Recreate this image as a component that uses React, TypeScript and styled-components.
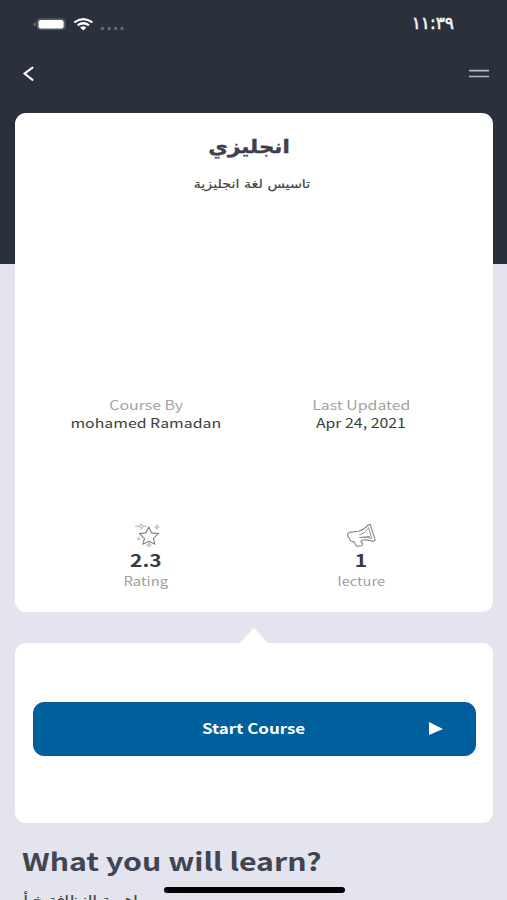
import React from "react";
import styled, { createGlobalStyle } from "styled-components";

const GlobalStyle = createGlobalStyle`
  * { box-sizing: border-box; }
  body { margin: 0; overflow: hidden; }
`;

const Screen = styled.main`
  width: 507px;
  height: 900px;
  overflow: hidden;
  display: flex;
  flex-direction: column;
  padding: 0 14px 0 15px;
  position: relative;
  background: linear-gradient(#2a303c 0 264.5px, #e4e4ee 264.5px);
  font-family: "Noto Sans CJK SC", "DejaVu Sans", sans-serif;
`;

const StatusBar = styled.header`
  height: 48px;
  flex: none;
  display: flex;
  justify-content: space-between;
  padding: 0 39px 0 18px;
`;

const StatusIcons = styled.svg`
  width: 95px;
  height: 48px;
`;

const NavBar = styled.nav`
  height: 64.5px;
  flex: none;
  display: flex;
  justify-content: space-between;
  align-items: flex-start;
  padding: 17px 3px 0 7px;
`;

const IconButton = styled.button`
  border: 0;
  padding: 0;
  background: none;
  display: flex;
`;

const Card = styled.section<{ $height: number }>`
  flex: none;
  height: ${(p) => p.$height}px;
  background: #fff;
  border-radius: 11px;
  display: flex;
  flex-direction: column;
`;

const Text = styled.span<{
  $size: number;
  $line: number;
  $color: string;
  $weight?: number;
  $stretch?: number;
  $thicken?: number;
  $arabic?: boolean;
  $start?: boolean;
}>`
  display: block;
  font-family: ${(p) => (p.$arabic ? '"DejaVu Sans"' : '"Noto Sans CJK SC"')}, sans-serif;
  font-size: ${(p) => p.$size}px;
  line-height: ${(p) => p.$line}px;
  height: ${(p) => p.$line}px;
  font-weight: ${(p) => p.$weight ?? 400};
  color: ${(p) => p.$color};
  -webkit-text-stroke: ${(p) => p.$thicken ?? 0}px ${(p) => p.$color};
  white-space: nowrap;
  transform: scaleX(${(p) => p.$stretch ?? 1});
  transform-origin: ${(p) => (p.$start ? "left" : "center")};
`;

const CourseTitle = styled.div`
  height: 283px;
  padding: 21.5px 5px 0 0;
  display: flex;
  flex-direction: column;
  align-items: center;
  gap: 14px;
`;

const TitleLine = styled.div`
  padding-right: 5px;
`;

const Columns = styled.div<{ $height: number }>`
  height: ${(p) => p.$height}px;
  display: grid;
  grid-template-columns: 215px 215px;
  padding-left: 23.5px;
`;

const Cell = styled.div`
  display: flex;
  flex-direction: column;
  align-items: center;
`;

const Pointer = styled.svg`
  width: 28px;
  height: 15px;
  margin: 16px auto 0;
  flex: none;
  display: block;
`;

const StartButton = styled.button`
  width: 443px;
  height: 54px;
  margin: 58.5px 0 0 17.5px;
  padding: 0 32px 2px;
  border: 1px solid #07568c;
  border-radius: 11px;
  background: #005f9d;
  display: grid;
  grid-template-columns: 14px 1fr 14px;
  align-items: center;
  justify-items: center;
`;

const Learn = styled.section`
  padding: 20px 0 0 7px;
`;

const LearnItem = styled.div`
  margin-top: 9px;
  width: 118px;
  height: 24px;
  display: flex;
  justify-content: center;
`;

const HomeIndicator = styled.div`
  position: absolute;
  left: 163.5px;
  top: 887.3px;
  width: 181px;
  height: 5.4px;
  border-radius: 3px;
  background: #030305;
`;

const StarDrawing = styled.svg`
  width: 26px;
  height: 26px;
  margin-left: 3px;
`;

const StarIcon = () => (
  <StarDrawing viewBox="0 0 26 26" fill="none" stroke="#7e8085" strokeWidth="1.1" strokeLinejoin="round">
    <path d="M13.8 3.9l2.9 6 6.8.7-5.2 4.7 1.7 6-6.2-3-6 3 1.7-6-5.3-4.7 6.7-.7z" />
    <g strokeWidth=".8" stroke="#999b9f">
      <path d="M0 3.3h5M8.2 3.3H11.5M6.4 .2v1.5M6.4 5v1.8" />
      <circle cx="6.4" cy="3.3" r="1.5" />
      <circle cx="22" cy="4" r="1.3" />
      <path d="M22 1.5v1M22 5.6v1M19.5 4h1M23.5 4h1" />
      <circle cx="3.6" cy="15.8" r="1" />
      <circle cx="14" cy="22" r="1.3" />
      <path d="M14 19.7v.9M14 23.5v.9M11.4 22h1M15.6 22h1" />
    </g>
  </StarDrawing>
);

const MegaphoneIcon = () => (
  <svg width="30" height="26" viewBox="0 0 30 26" fill="none" stroke="#85878b" strokeWidth="1.1" strokeLinejoin="round" strokeLinecap="round">
    <path d="M3 9.4L12.8 8.2Q18.5 6.5 22.3 1.9L24.2 1.5 29.2 17.2 27.3 18.5Q21.6 16 15.4 17.3L15 19.3 16.6 20.3 16 22.7 10.6 23.3 8 18.6 4.8 18.2Q3.8 15.6 1.8 13.4Q1 10.4 3 9.4z" />
    <path d="M22.6 5L25.8 15.4Q20.5 13.7 14.2 14.6M13.8 12Q19.4 10.2 22.6 5M13.7 14.6L23.5 13.4" strokeWidth=".9" />
  </svg>
);

export default function App() {
  return (
    <>
      <GlobalStyle />
      <Screen>
        <StatusBar>
          <StatusIcons viewBox="33 0 95 48">
            <path d="M35.5 22.2v4q-2-.6-2-2t2-2" fill="#777b84" />
            <rect x="36.7" y="18.2" width="29" height="11.8" rx="4" fill="#555b66" />
            <rect x="38.6" y="20" width="25" height="8.6" rx="2.5" fill="#fff" />
            <g fill="none" stroke="#fff" strokeWidth="2.2">
              <path d="M74.3 22.4Q83.3 15.7 92.4 22.4" />
              <path d="M77.6 25.4Q83.3 21.1 89 25.4" />
            </g>
            <path d="M80.2 27.5Q83.3 25.2 86.4 27.5L83.3 30.4z" fill="#fff" />
            <g fill="#666b76">
              <circle cx="102.5" cy="28.5" r="1.7" />
              <circle cx="109.2" cy="28.5" r="1.7" />
              <circle cx="115.6" cy="28.5" r="1.7" />
              <circle cx="122" cy="28.5" r="1.7" />
            </g>
          </StatusIcons>
          <Text $size={17} $line={47} $color="#f4f5f8" $thicken={0.6} $arabic>١١:٣٩</Text>
        </StatusBar>
        <NavBar>
          <IconButton aria-label="Back">
            <svg width="14" height="18" viewBox="0 0 14 18" fill="none" stroke="#fff" strokeWidth="2" strokeLinecap="round">
              <path d="M10.5 2.6L2.5 8.6l8 6.3" />
            </svg>
          </IconButton>
          <IconButton aria-label="Menu">
            <svg width="22" height="18" viewBox="0 0 22 18" stroke="#b3b8c2" strokeWidth="1.7">
              <path d="M1 5.6h20M1 11.5h20" />
            </svg>
          </IconButton>
        </NavBar>
        <Card $height={499.5}>
          <CourseTitle>
            <TitleLine>
              <Text $size={19} $line={24} $color="#3d404c" $weight={700} $stretch={1.13} $thicken={0.4} $arabic dir="rtl">انجليزي</Text>
            </TitleLine>
            <Text $size={12} $line={24} $color="#444" $stretch={1.19} $thicken={0.2} $arabic dir="rtl">تاسيس لغة انجليزية</Text>
          </CourseTitle>
          <Columns $height={127}>
            <Cell>
              <Text $size={13} $line={18.5} $color="#a3a3a3" $stretch={1.22}>Course By</Text>
              <Text $size={13} $line={18.5} $color="#3c3c3c" $stretch={1.22}>mohamed Ramadan</Text>
            </Cell>
            <Cell>
              <Text $size={13} $line={18.5} $color="#a3a3a3" $stretch={1.22}>Last Updated</Text>
              <Text $size={13} $line={18.5} $color="#3c3c3c" $stretch={1.22}>Apr 24, 2021</Text>
            </Cell>
          </Columns>
          <Columns $height={80}>
            <Cell>
              <StarIcon />
              <Text $size={17} $line={21} $color="#383b44" $weight={700} $stretch={1.23}>2.3</Text>
              <Text $size={12.5} $line={22} $color="#a0a0a0" $stretch={1.19}>Rating</Text>
            </Cell>
            <Cell>
              <MegaphoneIcon />
              <Text $size={17} $line={21} $color="#383b44" $weight={700} $stretch={1.23}>1</Text>
              <Text $size={12.5} $line={22} $color="#a0a0a0" $stretch={1.17}>lecture</Text>
            </Cell>
          </Columns>
        </Card>
        <Pointer viewBox="0 0 28 15">
          <path d="M0 15L12.6 1.2q1.4-1.4 2.8 0L28 15z" fill="#fff" />
        </Pointer>
        <Card $height={180}>
          <StartButton>
            <span />
            <Text $size={14} $line={24} $color="#fff" $weight={700} $stretch={1.21}>Start Course</Text>
            <svg width="14" height="14" viewBox="0 0 14 14">
              <path d="M0 1l14 7-14 6z" fill="#fff" />
            </svg>
          </StartButton>
        </Card>
        <Learn>
          <Text $size={24.5} $line={36} $color="#414552" $weight={700} $stretch={1.235} $start>What you will learn?</Text>
          <LearnItem>
            <Text $size={12} $line={24} $color="#444" $stretch={1.34} $thicken={0.2} $arabic dir="rtl">اهمية النظافة خبأ</Text>
          </LearnItem>
        </Learn>
        <HomeIndicator />
      </Screen>
    </>
  );
}
